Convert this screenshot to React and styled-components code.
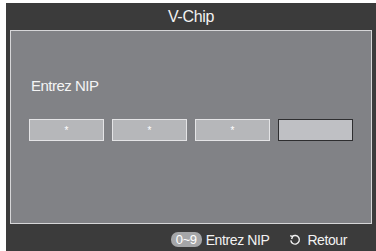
import React from 'react';
import styled, { createGlobalStyle } from 'styled-components';

const Global = createGlobalStyle`
	body {
		margin: 0;
		background: #ffffff;
		font-family: "Liberation Sans", Arial, sans-serif;
	}
`

const Screen = styled.div`
	margin: 3px 0 0 6px;
	width: 370px;
	height: 248px;
	background-color: #3b3b3b;
	display: flex;
	flex-direction: column;
`

const Title = styled.div`
	height: 27px;
	line-height: 28px;
	color: #f2f2f2;
	font-size: 16px;
	letter-spacing: -0.3px;
	text-align: center;
`

const Panel = styled.div`
	margin: 0 4px 0 4px;
	height: 194px;
	box-sizing: border-box;
	background-color: #818286;
	border: 1px solid #d6d6d8;
	padding: 47px 0 0 20px;
	display: flex;
	flex-direction: column;
`

const Label = styled.div`
	color: #f4f4f4;
	font-size: 15px;
	letter-spacing: -0.5px;
	height: 16px;
	line-height: 16px;
`

const Boxes = styled.div`
	display: flex;
	gap: 8px;
	margin-top: 25px;
	margin-left: -2px;
`

const Box = styled.div`
	width: 75px;
	height: 22px;
	box-sizing: border-box;
	border: 1px solid ${props => props.active ? '#2e2e30' : '#e4e4e6'};
	background-color: ${props => props.active ? '#bfc0c4' : '#b6b7ba'};
	color: #ffffff;
	font-size: 10px;
	display: flex;
	align-items: center;
	justify-content: center;
`

const Footer = styled.div`
	flex: 1;
	display: flex;
	align-items: center;
	justify-content: flex-end;
	padding: 4px 29px 0 0;
	color: #f2f2f2;
	font-size: 14px;
	letter-spacing: -0.4px;
`

const Hint = styled.span`
	display: flex;
	align-items: center;
	gap: ${props => props.inner || 4}px;
	margin-left: ${props => props.gap || 0}px;
`

const Pill = styled.span`
	background-color: #a5a6a8;
	border-radius: 7px;
	padding: 0 5px;
	height: 15px;
	line-height: 15px;
	font-size: 13px;
	color: #ffffff;
`

export default function App(){
	return(
		<>
			<Global />
			<Screen>
				<Title>V-Chip</Title>
				<Panel>
					<Label>Entrez NIP</Label>
					<Boxes>
						<Box>*</Box>
						<Box>*</Box>
						<Box>*</Box>
						<Box active />
					</Boxes>
				</Panel>
				<Footer>
					<Hint><Pill>0~9</Pill>Entrez NIP</Hint>
					<Hint gap={20} inner={6}>
						<svg width="12" height="12" viewBox="0 0 12 12" fill="none" stroke="#f2f2f2" strokeWidth="1.4">
							<path d="M3.2 2.6 A4.3 4.3 0 1 1 1.8 6.4" />
							<path d="M1.2 1.6 L3.6 2.6 L2.6 5" />
						</svg>
						Retour
					</Hint>
				</Footer>
			</Screen>
		</>
	)
}
